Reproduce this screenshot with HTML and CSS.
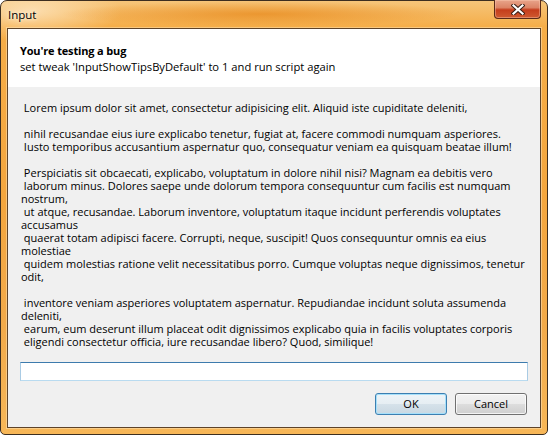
FILE: index.html
```html
<!DOCTYPE html>
<html>
<head>
<meta charset="utf-8">
<link rel="stylesheet" href="styles.css">
</head>
<body>
<div class="window">
  <div class="titlebar">
    <span class="title">Input</span>
    <div class="close">
      <svg width="14" height="11" viewBox="0 0 14 11">
        <path d="M2.5 1.5 L11.5 9.5 M11.5 1.5 L2.5 9.5" stroke="#3a1e14" stroke-width="4.2" stroke-linecap="square" fill="none"/>
        <path d="M2.5 1.5 L11.5 9.5 M11.5 1.5 L2.5 9.5" stroke="#ffffff" stroke-width="2.2" stroke-linecap="square" fill="none"/>
      </svg>
    </div>
  </div>
  <div class="client">
    <div class="header">
      <div class="h-title">You're testing a bug</div>
      <div class="h-sub">set tweak 'InputShowTipsByDefault' to 1 and run script again</div>
    </div>
    <div class="content">
<div class="msg"> Lorem ipsum dolor sit amet, consectetur adipisicing elit. Aliquid iste cupiditate deleniti,

 nihil recusandae eius iure explicabo tenetur, fugiat at, facere commodi numquam asperiores.
 Iusto temporibus accusantium aspernatur quo, consequatur veniam ea quisquam beatae illum!

 Perspiciatis sit obcaecati, explicabo, voluptatum in dolore nihil nisi? Magnam ea debitis vero
 laborum minus. Dolores saepe unde dolorum tempora consequuntur cum facilis est numquam
nostrum,
 ut atque, recusandae. Laborum inventore, voluptatum itaque incidunt perferendis voluptates
accusamus
 quaerat totam adipisci facere. Corrupti, neque, suscipit! Quos consequuntur omnis ea eius
molestiae
 quidem molestias ratione velit necessitatibus porro. Cumque voluptas neque dignissimos, tenetur
odit,

 inventore veniam asperiores voluptatem aspernatur. Repudiandae incidunt soluta assumenda
deleniti,
 earum, eum deserunt illum placeat odit dignissimos explicabo quia in facilis voluptates corporis
 eligendi consectetur officia, iure recusandae libero? Quod, similique!</div>
      <input class="field" type="text">
      <div class="buttons">
        <button class="btn btn-default">OK</button>
        <button class="btn">Cancel</button>
      </div>
    </div>
  </div>
</div>
</body>
</html>
```

FILE: styles.css
```css
html, body {
  margin: 0;
  padding: 0;
  background: #ffffff;
}

body {
  font-family: "Open Sans", "Noto Sans", "DejaVu Sans", sans-serif;
  color: #000000;
}

.window {
  width: 548px;
  height: 435px;
  box-sizing: border-box;
  border: 1px solid #3d2e20;
  border-radius: 7px 7px 5px 5px;
  padding: 0 6px 6px 6px;
  display: flex;
  flex-direction: column;
  background:
    radial-gradient(ellipse 200px 13px at 260px 13px, rgba(228, 128, 16, 0.6), rgba(228, 128, 16, 0) 100%),
    radial-gradient(ellipse 90px 30px at 30px 10px, rgba(255, 236, 205, 0.7), rgba(255, 236, 205, 0) 100%),
    linear-gradient(to bottom, #f6c57a 0px, #f5ad48 26px, #f4a63e 45%, #f2aa4a 75%, #f7b758 100%);
}

.titlebar {
  height: 27px;
  flex: none;
  display: flex;
  justify-content: space-between;
  align-items: flex-start;
}

.title {
  font-size: 11.5px;
  line-height: 27px;
  padding-left: 1px;
  color: #000000;
  text-shadow: 0 0 6px #fff3e0, 0 0 3px #fff3e0;
}

.close {
  width: 47px;
  height: 19px;
  box-sizing: border-box;
  margin-top: -1px;
  border: 1px solid #5a2a18;
  border-top: none;
  border-radius: 0 0 4px 4px;
  background: linear-gradient(to bottom, #e8a48a 0%, #dc8466 42%, #c53d1c 55%, #cf5a30 100%);
  box-shadow: inset 0 0 0 1px rgba(255, 210, 185, 0.4);
  display: flex;
  align-items: center;
  justify-content: center;
}

.close svg {
  display: block;
}

.client {
  flex: 1;
  border: 1px solid #5e4328;
  background: #f0f0f0;
  display: flex;
  flex-direction: column;
  box-shadow: 0 0 0 1px rgba(255, 236, 200, 0.45);
}

.header {
  background: #ffffff;
  height: 58px;
  box-sizing: border-box;
  padding: 14px 12px 0 12px;
  flex: none;
}

.h-title {
  font-weight: bold;
  font-size: 11px;
  line-height: 16px;
  letter-spacing: -0.15px;
}

.h-sub {
  font-size: 11.2px;
  line-height: 16px;
}

.content {
  flex: 1;
  display: flex;
  flex-direction: column;
  padding: 14px 12px 12px 12px;
}

.msg {
  white-space: pre;
  font-size: 11px;
  line-height: 13px;
  padding-left: 1px;
  height: 247px;
}

.field {
  margin: 14px 0 0 0;
  height: 19px;
  box-sizing: border-box;
  width: 100%;
  border: 1px solid #a9cbe4;
  border-top-color: #3d7bad;
  border-bottom-color: #b9dbf0;
  background: #ffffff;
  padding: 0 3px;
  outline: none;
  font-family: inherit;
  font-size: 11px;
}

.buttons {
  margin-top: 12px;
  display: flex;
  justify-content: flex-end;
  gap: 8px;
  padding-right: 1px;
}

.btn {
  width: 72px;
  height: 22px;
  box-sizing: border-box;
  border: 1px solid #707070;
  border-radius: 3px;
  background: linear-gradient(to bottom, #f2f2f2 0%, #ebebeb 50%, #dddddd 50%, #cfcfcf 100%);
  box-shadow: inset 0 0 0 1px rgba(255, 255, 255, 0.75);
  font-family: inherit;
  font-size: 11px;
  color: #000000;
  padding: 0;
  line-height: 20px;
}

.btn-default {
  border-color: #3c7fb1;
  box-shadow: inset 0 0 0 1px #a6e0fa;
  background: linear-gradient(to bottom, #eef4f8 0%, #e6eef3 50%, #d6e2ea 50%, #c9d8e2 100%);
}
```
